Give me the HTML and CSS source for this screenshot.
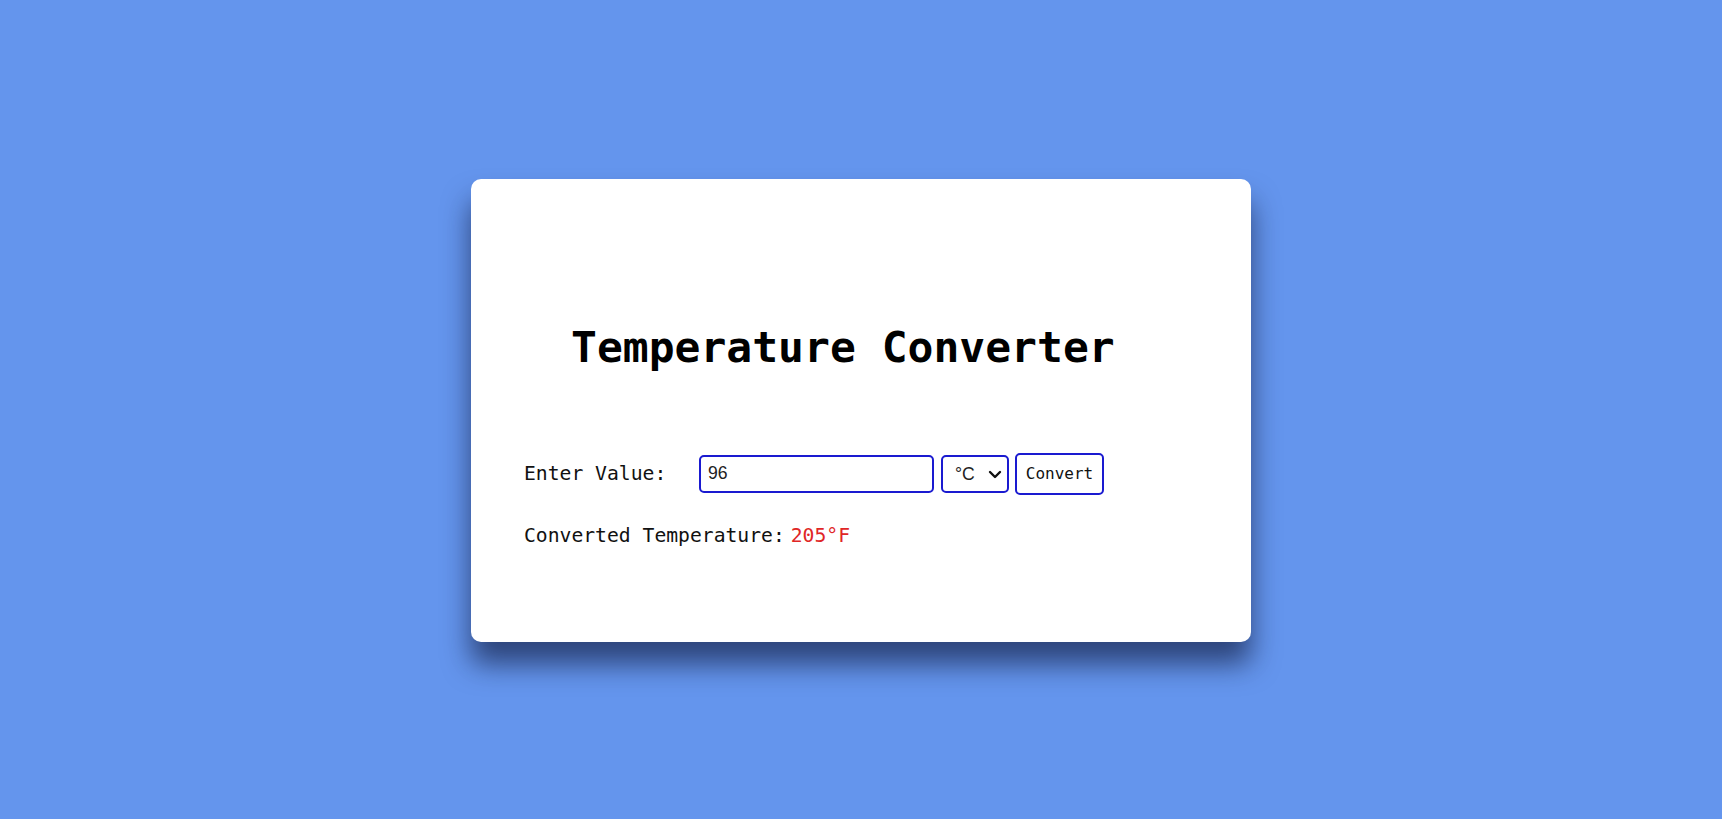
FILE: index.html
```html
<!DOCTYPE html>
<html lang="en">
<head>
<meta charset="utf-8">
<title>Temperature Converter</title>
<link rel="stylesheet" href="styles.css">
</head>
<body>
<main class="card">
  <h1 class="title">Temperature Converter</h1>
  <div class="row">
    <label class="label" for="val">Enter Value:</label>
    <input class="value-input" id="val" type="text" value="96">
    <div class="select-wrap">
      <select class="unit-select">
        <option>°C</option>
        <option>°F</option>
      </select>
      <svg class="chevron" width="14" height="9" viewBox="0 0 14 9"><path d="M2 2 L7 7 L12 2" fill="none" stroke="#111" stroke-width="2.4" stroke-linecap="round" stroke-linejoin="round"/></svg>
    </div>
    <button class="convert-btn" type="button">Convert</button>
  </div>
  <p class="result"><span class="result-label">Converted Temperature:</span><span class="result-value">205°F</span></p>
</main>
</body>
</html>
```

FILE: styles.css
```css
html, body {
  margin: 0;
  padding: 0;
}
body {
  background: #6495ed;
  height: 100vh;
  display: flex;
  align-items: center;
  justify-content: center;
  font-family: "DejaVu Sans Mono", monospace;
  color: #111;
}
.card {
  box-sizing: border-box;
  width: 780px;
  height: 463px;
  margin-top: 1px;
  background: #fff;
  border-radius: 10px;
  box-shadow: 0 22px 28px rgba(15, 25, 60, 0.65);
  padding: 0 0 0 53px;
  display: flex;
  flex-direction: column;
}
.title {
  margin: 142px 0 0 47px;
  font-size: 43px;
  line-height: 52px;
  font-weight: bold;
  color: #000;
  letter-spacing: 0;
}
.row {
  margin-top: 80px;
  height: 42px;
  display: flex;
  align-items: center;
}
.label {
  flex: none;
  width: 175px;
  font-size: 19.7px;
}
.value-input {
  box-sizing: border-box;
  width: 235px;
  height: 38px;
  border: 2.5px solid #1a1ad0;
  border-radius: 5px;
  padding: 0 7px;
  font-family: "Liberation Sans", Arial, sans-serif;
  font-size: 17.6px;
  color: #222;
  outline: none;
}
.select-wrap {
  position: relative;
  margin-left: 7px;
  height: 38px;
}
.unit-select {
  box-sizing: border-box;
  -webkit-appearance: none;
  appearance: none;
  width: 68px;
  height: 38px;
  border: 2.5px solid #1a1ad0;
  border-radius: 5px;
  background: #fff;
  padding: 0 0 0 12px;
  font-family: "Liberation Sans", Arial, sans-serif;
  font-size: 17.6px;
  color: #222;
  outline: none;
}
.chevron {
  position: absolute;
  right: 7px;
  top: 15px;
  pointer-events: none;
}
.convert-btn {
  box-sizing: border-box;
  margin-left: 6px;
  width: 89px;
  height: 42px;
  border: 2.5px solid #1a1ad0;
  border-radius: 5px;
  background: #fff;
  padding: 0 8px;
  font-family: "DejaVu Sans Mono", monospace;
  font-size: 16px;
  color: #111;
}
.result {
  margin: 29px 0 0;
  font-size: 19.7px;
  line-height: 24px;
}
.result-value {
  margin-left: 6px;
  color: #e02626;
}
```
